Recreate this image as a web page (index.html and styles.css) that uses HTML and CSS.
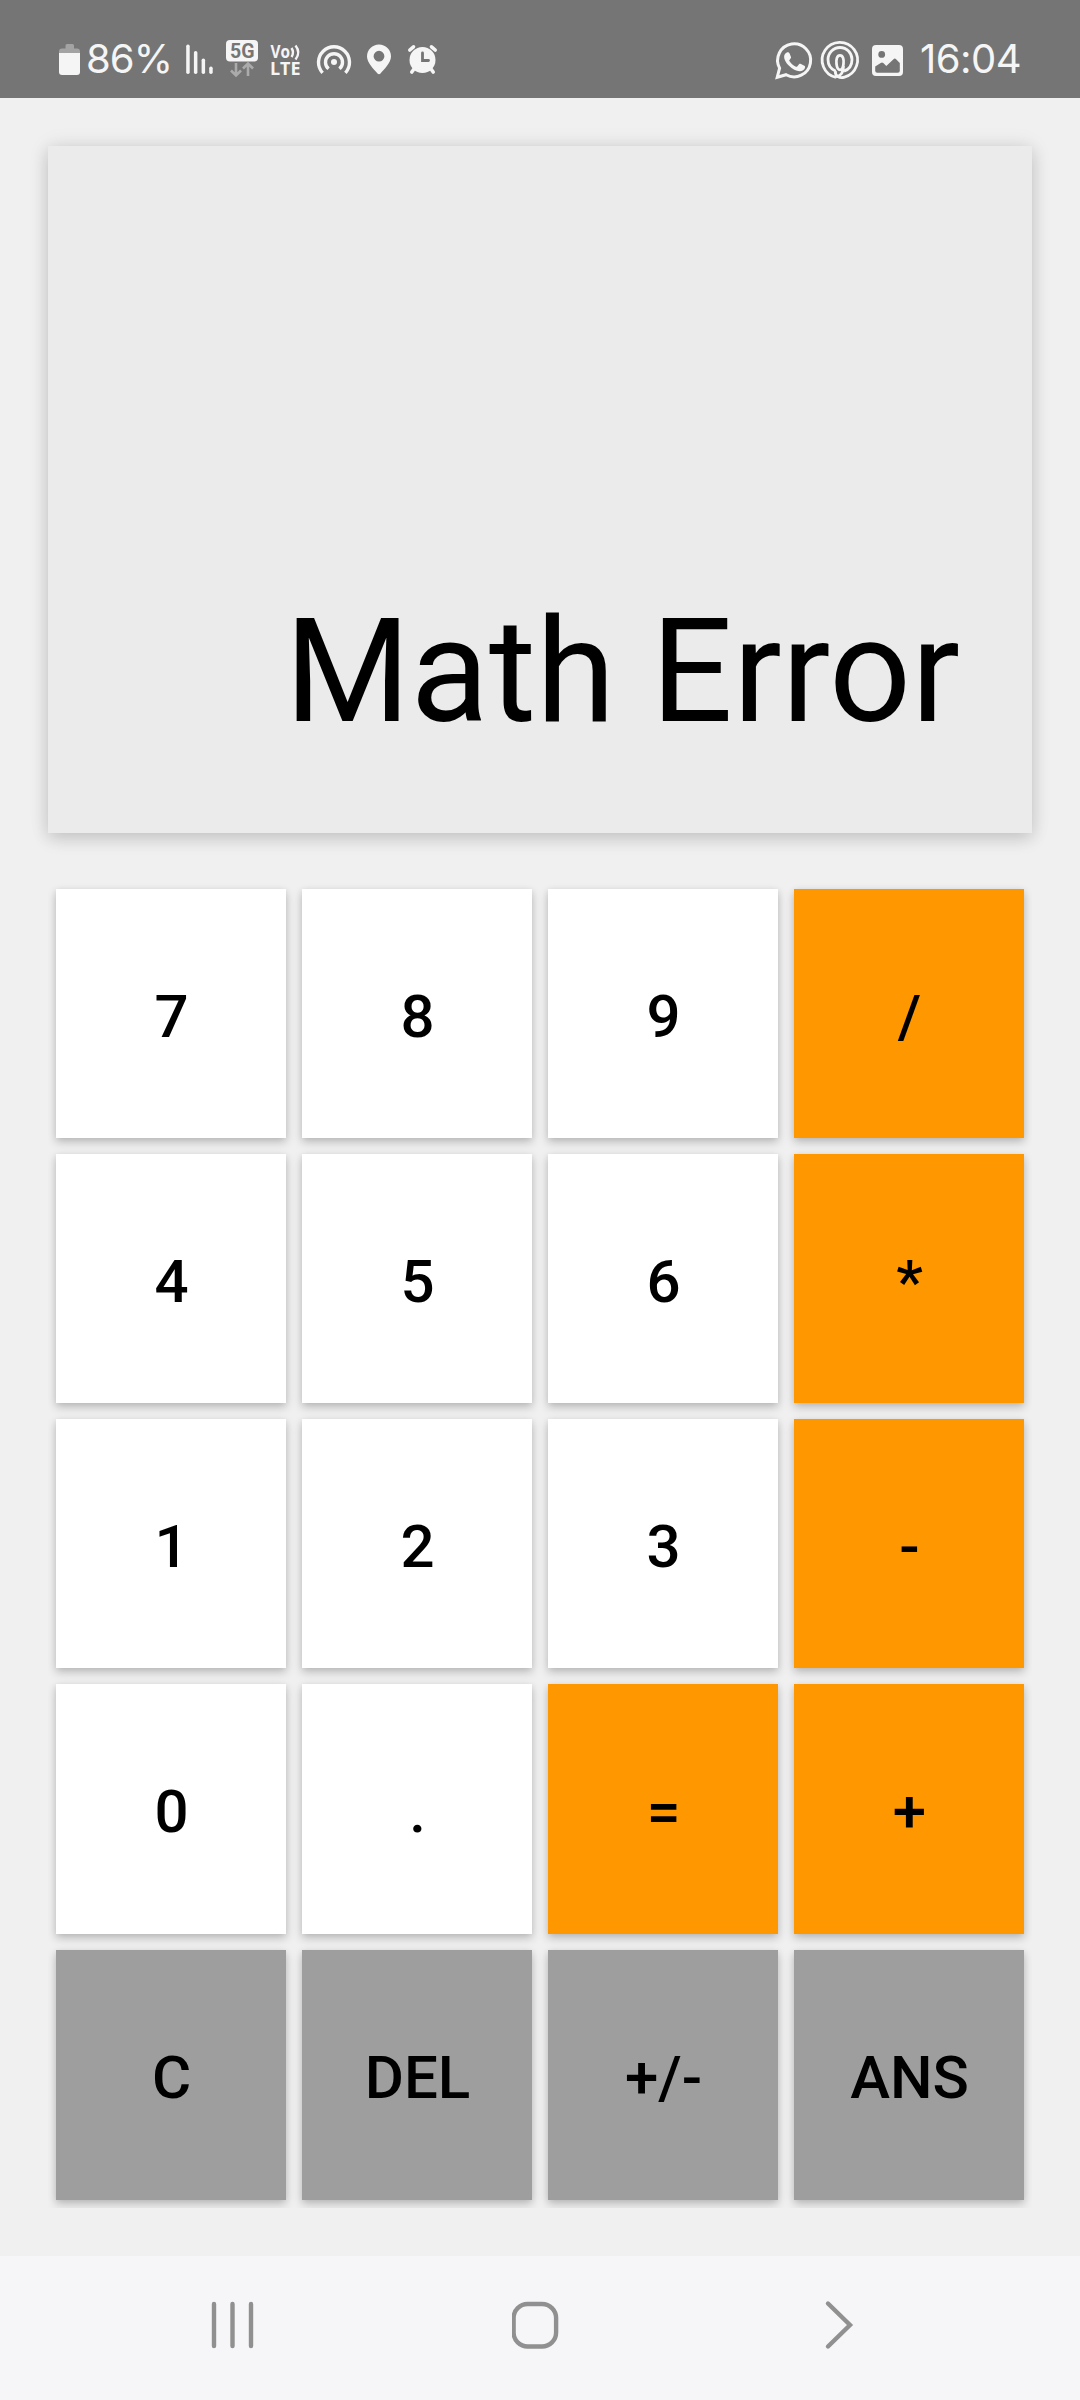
FILE: index.html
```html
<!DOCTYPE html>
<html lang="en">
<head>
<meta charset="utf-8">
<title>Calculator</title>
<link rel="stylesheet" href="styles.css">
</head>
<body>
<header class="status">
  <div class="status-group">
    <svg class="battery" width="21" height="31" viewBox="0 0 21 31"><path fill="#a3a3a3" d="M6.500 3V1.500Q6.500 0 8 0h5.500Q15 0 15 1.500V4.500h3q3 0 3 3V9H0V7.500q0-3 3-3h3.500z"/><path d="M0 9h21v19q0 3-3 3H3q-3 0-3-3z"/></svg>
    <span class="percent">86%</span>
    <svg class="signal" width="27" height="30" viewBox="0 0 27 30"><rect x=".2" y=".5" width="3.500" height="29.500" rx="1.700"/><rect x="7.900" y="7" width="3.500" height="23" rx="1.700"/><rect x="15.600" y="14.500" width="3.500" height="15.500" rx="1.700"/><rect x="23.200" y="22.500" width="3.500" height="7.500" rx="1.700"/></svg>
    <svg class="network" width="32" height="37" viewBox="0 0 32 37"><rect width="32" height="21.500" rx="4"/><text class="network-label" x="4" y="18" textLength="24.500" lengthAdjust="spacingAndGlyphs">5G</text><path class="arrows" d="M10 23v12M5 30.500l5 5 5-5M22 36V24M17 28.500l5-5 5 5"/></svg>
    <svg class="volte" width="31" height="32" viewBox="0 0 31 32"><text class="volte-label" x="0.500" y="14" textLength="19.500" lengthAdjust="spacingAndGlyphs">Vo</text><text class="volte-label" x="0" y="31" textLength="30.500" lengthAdjust="spacingAndGlyphs">LTE</text><path class="waves" d="M21.500 4q3 4.500 0 9M25.500 1.500q5.500 7 0 14"/></svg>
    <svg class="hotspot" width="36" height="32" viewBox="0 0 36 32"><circle cx="18" cy="18" r="3"/><path class="ring" d="M6.600 28.800A15.500 15.500 0 1 1 29.400 28.800M12.600 24.800A8.500 8.500 0 1 1 23.400 24.800"/></svg>
    <svg class="pin" width="24" height="31" viewBox="0 0 24 31"><path fill-rule="evenodd" d="M12 .5a12 12 0 0 1 12 12c0 6-7 13-10.500 17q-1.500 1.500-3 0C7 25.500 0 18.500 0 12.500a12 12 0 0 1 12-12zm0 6.300a5.400 5.400 0 1 0 0 10.800 5.400 5.400 0 0 0 0-10.800z"/></svg>
    <svg class="alarm" width="29" height="29" viewBox="0 0 29 29"><circle cx="14.500" cy="15" r="13"/><path class="limbs" d="M1.800 5l3.700-3.200M23.500 1.800L27.200 5M6 24l-2.200 3M23 24l2.200 3"/><path class="hands" d="M14.500 8v7.500h6"/></svg>
  </div>
  <div class="status-group">
    <svg class="chat" width="37" height="38" viewBox="0 0 37 38"><path class="bubble" d="M2.200 35.300l2.400-9.200a16.500 16.500 0 1 1 6.500 6.600z"/><path d="M12.300 10.300c1.200-.3 1.900.3 2.300 1.300l1.400 3.400c.3.900-.4 1.700-1.500 2.900-.4.500-.2.900.1 1.400 1.600 2.600 3.700 4.300 6.400 5.400.6.300 1 .1 1.400-.4l1.600-2c.6-.7 1.200-.6 2-.2l3.300 1.600c.8.400.9 1 .7 2-.5 2.200-3 3.700-5.400 3.600-3.400-.2-7.300-2.200-10.600-5.500-2.900-2.900-4.900-6.300-4.900-8.900 0-2 1.300-4.100 3.200-4.600z"/></svg>
    <svg class="swirl" width="40" height="40" viewBox="0 0 40 40"><path d="M16 37.300A17.700 17.700 0 1 1 24.500 37.100C19.500 38.800 15 36 15.300 31M20 15.300c-3 0-4 4-3.500 8.500.4 3.800 1.500 6 3.500 6s3.100-2.200 3.500-6c.5-4.500-.5-8.500-3.500-8.500zM15.800 31.200C10.500 29 8 24.500 8 19.500a12 12 0 0 1 24 0c0 5.500-3 10-8 11.700M16 37c5-1 7.500-5 7.500-11"/></svg>
    <svg class="picture" width="31" height="31" viewBox="0 0 31 31"><path fill-rule="evenodd" d="M4 0h23q4 0 4 4v23q0 4-4 4H4q-4 0-4-4V4q0-4 4-4zM9.700 6a3.400 3.400 0 1 0 0 6.800 3.400 3.400 0 0 0 0-6.800zM3.200 21.500v4.300q0 2 2 2h20.600q2 0 2-2V18l-3.700-3.800q-1.300-1.200-2.600 0L14.300 21l-3-3q-1.300-1.200-2.600 0z"/></svg>
    <span class="time">16:04</span>
  </div>
</header>
<main class="app">
  <section class="display">Math Error</section>
  <section class="keypad">
    <button class="key">7</button><button class="key">8</button><button class="key">9</button><button class="key operator">/</button>
    <button class="key">4</button><button class="key">5</button><button class="key">6</button><button class="key operator">*</button>
    <button class="key">1</button><button class="key">2</button><button class="key">3</button><button class="key operator">-</button>
    <button class="key">0</button><button class="key">.</button><button class="key operator">=</button><button class="key operator">+</button>
    <button class="key action">C</button><button class="key action">DEL</button><button class="key action">+/-</button><button class="key action">ANS</button>
  </section>
</main>
<nav class="navigation">
  <svg width="48" height="52" viewBox="0 0 48 52"><path d="M5 5v42M23.500 5v42M42 5v42"/></svg>
  <svg width="48" height="52" viewBox="0 0 48 52"><rect x="1.600" y="5" width="42.500" height="42.500" rx="14"/></svg>
  <svg width="48" height="52" viewBox="0 0 48 52"><path d="M13 4.500l22 21.500-22 21.500"/></svg>
</nav>
</body>
</html>
```
FILE: styles.css
```css
* { box-sizing: border-box; }

body {
  margin: 0;
  width: 1080px;
  height: 2400px;
  display: flex;
  flex-direction: column;
  background: #f0f0f0;
  font-family: Roboto, "Liberation Sans", sans-serif;
  color: #000;
}

.status {
  height: 98px;
  padding: 0 59px;
  display: flex;
  justify-content: space-between;
  background: #757575;
  color: #f5f5f5;
  fill: #f5f5f5;
}

.status-group { display: flex; align-items: flex-start; }
.status svg { flex: none; overflow: visible; }

.percent, .time {
  font-family: Inter, sans-serif;
  font-size: 40px;
  line-height: 48px;
  margin-top: 35px;
  white-space: nowrap;
}
.percent { width: 83px; margin-left: 6px; letter-spacing: -0.9px; }
.time { width: 101px; margin-left: 17px; letter-spacing: -0.5px; }

.battery { margin-top: 44px; }
.signal { margin: 44px 0 0 17px; }
.network { margin: 40px 0 0 13px; }
.network-label { font: 700 20px Roboto, sans-serif; fill: #757575; }
.arrows { fill: none; stroke: #ababab; stroke-width: 2.6; }
.volte { margin: 44px 0 0 12px; }
.volte-label { font: 700 17.5px "Open Sans", sans-serif; }
.waves { fill: none; stroke: #f5f5f5; stroke-width: 2.4; }
.hotspot { margin: 44px 0 0 15px; }
.ring { fill: none; stroke: #f5f5f5; stroke-width: 3.4; }
.pin { margin: 44px 0 0 15px; }
.alarm { margin: 45px 0 0 17px; }
.limbs { fill: none; stroke: #f5f5f5; stroke-width: 3.6; stroke-linecap: round; }
.hands { fill: none; stroke: #757575; stroke-width: 2.8; stroke-linecap: round; }
.chat { margin: 42px 0 0; }
.bubble { fill: none; stroke: #f5f5f5; stroke-width: 3; }
.swirl { margin: 40px 0 0 8px; fill: none; stroke: #f5f5f5; stroke-width: 2.8; }
.picture { margin: 45px 0 0 12px; }

.app { flex: 1; padding: 48px; }

.display {
  height: 687px;
  padding: 0 72px 89px 0;
  display: flex;
  align-items: flex-end;
  justify-content: flex-end;
  background: #ebebeb;
  box-shadow: 0 6px 16px rgba(0, 0, 0, 0.14), 0 0 20px rgba(0, 0, 0, 0.09);
  font-size: 144px;
  line-height: 1;
}

.keypad {
  height: 1327px;
  margin-top: 48px;
  padding: 8px;
  display: grid;
  grid-template-columns: repeat(4, 230px);
  grid-template-rows: 249px 249px 249px 250px 250px;
  gap: 16px;
  overflow: hidden;
}

.key {
  border: 0;
  padding: 6px 0 0 1px;
  background: #fff;
  color: #000;
  font: 500 60px/70px Roboto, sans-serif;
  box-shadow: 0 4px 9px rgba(0, 0, 0, 0.22), 0 1px 6px rgba(0, 0, 0, 0.06);
}
.operator { background: #ff9800; }
.action { background: #9e9e9e; }

.navigation {
  height: 144px;
  padding: 43px 217px 0 209px;
  display: flex;
  justify-content: space-between;
  background: #f6f6f9;
}
.navigation svg {
  fill: none;
  stroke: #909090;
  stroke-width: 4.4;
  stroke-linecap: round;
}
```
